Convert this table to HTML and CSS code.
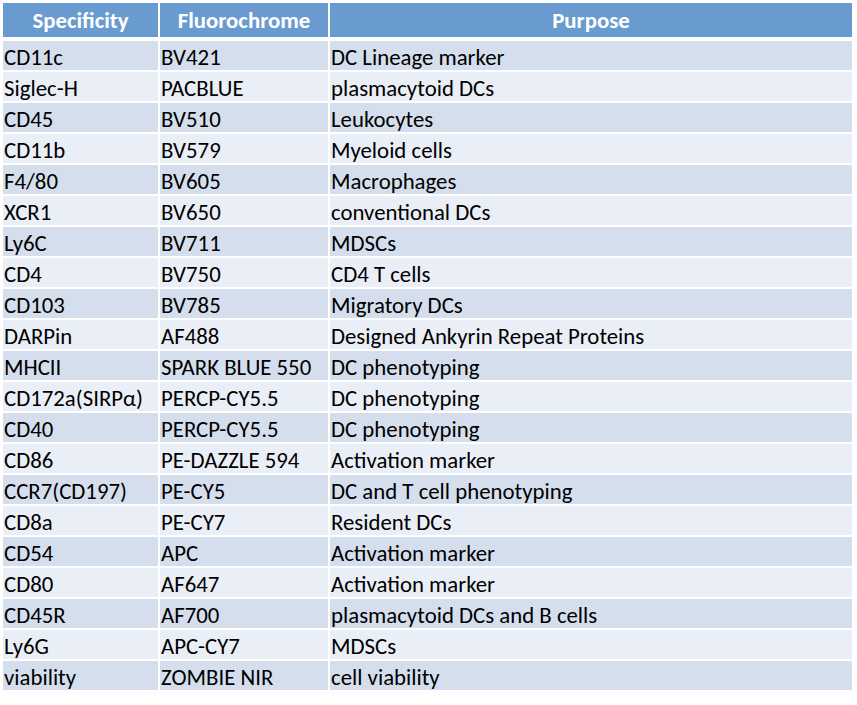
FILE: index.html
```html
<!DOCTYPE html>
<html lang="en">
<head>
<meta charset="utf-8">
<title>Panel</title>
<link rel="stylesheet" href="styles.css">
</head>
<body>
<div class="panel">
  <div class="row head">
    <div class="cell">Specificity</div>
    <div class="cell">Fluorochrome</div>
    <div class="cell">Purpose</div>
  </div>
  <div class="row a"><div class="cell">CD11c</div><div class="cell">BV421</div><div class="cell">DC Lineage marker</div></div>
  <div class="row b"><div class="cell">Siglec-H</div><div class="cell">PACBLUE</div><div class="cell">plasmacytoid DCs</div></div>
  <div class="row a"><div class="cell">CD45</div><div class="cell">BV510</div><div class="cell">Leukocytes</div></div>
  <div class="row b"><div class="cell">CD11b</div><div class="cell">BV579</div><div class="cell">Myeloid cells</div></div>
  <div class="row a"><div class="cell">F4/80</div><div class="cell">BV605</div><div class="cell">Macrophages</div></div>
  <div class="row b"><div class="cell">XCR1</div><div class="cell">BV650</div><div class="cell">conventional DCs</div></div>
  <div class="row a"><div class="cell">Ly6C</div><div class="cell">BV711</div><div class="cell">MDSCs</div></div>
  <div class="row b"><div class="cell">CD4</div><div class="cell">BV750</div><div class="cell">CD4 T cells</div></div>
  <div class="row a"><div class="cell">CD103</div><div class="cell">BV785</div><div class="cell">Migratory DCs</div></div>
  <div class="row b"><div class="cell">DARPin</div><div class="cell">AF488</div><div class="cell">Designed Ankyrin Repeat Proteins</div></div>
  <div class="row a"><div class="cell">MHCII</div><div class="cell">SPARK BLUE 550</div><div class="cell">DC phenotyping</div></div>
  <div class="row b"><div class="cell">CD172a(SIRPα)</div><div class="cell">PERCP-CY5.5</div><div class="cell">DC phenotyping</div></div>
  <div class="row a"><div class="cell">CD40</div><div class="cell">PERCP-CY5.5</div><div class="cell">DC phenotyping</div></div>
  <div class="row b"><div class="cell">CD86</div><div class="cell">PE-DAZZLE 594</div><div class="cell">Activation marker</div></div>
  <div class="row a"><div class="cell">CCR7(CD197)</div><div class="cell">PE-CY5</div><div class="cell">DC and T cell phenotyping</div></div>
  <div class="row b"><div class="cell">CD8a</div><div class="cell">PE-CY7</div><div class="cell">Resident DCs</div></div>
  <div class="row a"><div class="cell">CD54</div><div class="cell">APC</div><div class="cell">Activation marker</div></div>
  <div class="row b"><div class="cell">CD80</div><div class="cell">AF647</div><div class="cell">Activation marker</div></div>
  <div class="row a"><div class="cell">CD45R</div><div class="cell">AF700</div><div class="cell">plasmacytoid DCs and B cells</div></div>
  <div class="row b"><div class="cell">Ly6G</div><div class="cell">APC-CY7</div><div class="cell">MDSCs</div></div>
  <div class="row a"><div class="cell">viability</div><div class="cell">ZOMBIE NIR</div><div class="cell">cell viability</div></div>
</div>
</body>
</html>
```
FILE: styles.css
```css
html, body {
  margin: 0;
  padding: 0;
  background: #ffffff;
}
body {
  font-family: Carlito, Lato, "Liberation Sans", sans-serif;
  font-size: 22.8px;
  color: #000000;
}
.panel {
  display: grid;
  grid-template-columns: 155px 168px 522px;
  grid-template-rows: 36px;
  grid-auto-rows: 29px;
  column-gap: 2px;
  row-gap: 2px;
  margin: 3px 0 0 3px;
}
.row {
  display: contents;
}
.cell {
  display: flex;
  align-items: center;
  padding: 2px 0 0 1px;
  white-space: nowrap;
  overflow: hidden;
}
.head .cell {
  height: 34px;
  align-self: start;
  justify-content: center;
  padding: 0;
  background: #6a9bd0;
  color: #ffffff;
  font-weight: bold;
}
.a .cell {
  background: #d4deec;
}
.b .cell {
  background: #eaeef6;
}
```
